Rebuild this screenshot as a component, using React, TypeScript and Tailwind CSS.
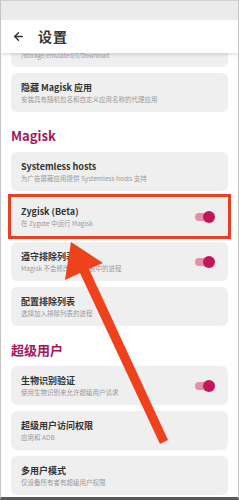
import React from 'react';
import { ArrowLeft } from 'lucide-react';

type Row = {
  title: string;
  desc: string;
  toggle?: boolean;
  boxed?: boolean;
};

const magiskRows: Row[] = [
  { title: 'Systemless hosts', desc: '为广告屏蔽应用提供 Systemless hosts 支持' },
  { title: 'Zygisk (Beta)', desc: '在 Zygote 中运行 Magisk', toggle: true, boxed: true },
  { title: '遵守排除列表', desc: 'Magisk 不会修改排除列表中的进程', toggle: true },
  { title: '配置排除列表', desc: '选择加入排除列表的进程' },
];

const suRows: Row[] = [
  { title: '生物识别验证', desc: '使用生物识别来允许超级用户请求', toggle: true },
  { title: '超级用户访问权限', desc: '应用和 ADB' },
  { title: '多用户模式', desc: '仅设备所有者有超级用户权限' },
];

const Toggle = () => (
  <div className="relative w-[20px] h-[12px] flex items-center shrink-0">
    <div className="w-[16px] h-[8px] rounded-full bg-[#e98bab]" />
    <div className="absolute right-0 w-[12px] h-[12px] rounded-full bg-[#c4145a]" />
  </div>
);

const Card = ({ row }: { row: Row }) => (
  <div
    className={`h-[39px] rounded-[6px] bg-[#efefef] pl-[10px] pr-[13px] flex items-center justify-between ${
      row.boxed ? 'ring-[3px] ring-[#e9411f] rounded-none' : ''
    }`}
  >
    <div className="flex flex-col">
      <span className="text-[9px] leading-[12px] font-semibold text-[#333]">{row.title}</span>
      <span className="text-[6.5px] leading-[9px] text-[#9a9a9a] mt-[1px]">{row.desc}</span>
    </div>
    {row.toggle && <Toggle />}
  </div>
);

const Section = ({ label }: { label: string }) => (
  <div className="h-[40px] flex items-center pt-[8px]">
    <span className="text-[13px] font-bold text-[#a3185b]">{label}</span>
  </div>
);

export default function App() {
  return (
    <div className="relative w-[239px] h-[500px] overflow-hidden bg-white border-x border-[#c4c4c4] border-b-[3px] border-b-[#5a5a5a] font-['Noto_Sans_CJK_SC','Noto_Sans',sans-serif]">
      {/* status bar */}
      <div className="h-[20px] bg-[#ebebeb] border-t border-[#cfcfcf]" />

      {/* app bar */}
      <div className="relative z-10 h-[33px] bg-white flex items-center px-[11px] gap-[13px] shadow-[0_2px_3px_rgba(0,0,0,0.12)]">
        <ArrowLeft size={13} strokeWidth={2.6} className="text-[#333]" />
        <span className="text-[14px] font-bold text-[#333] tracking-[1px]">设置</span>
      </div>

      <div className="flex flex-col gap-[6px] px-[10px]">
        {/* partially scrolled card */}
        <div className="h-[14px] rounded-b-[6px] bg-[#efefef] pl-[10px] flex items-start">
          <span className="text-[6px] leading-[7px] text-[#9a9a9a] mt-[-1px]">/storage/emulated/0/Download</span>
        </div>
        <Card row={{ title: '隐藏 Magisk 应用', desc: '安装具有随机包名和自定义应用名称的代理应用' }} />
      </div>

      <div className="flex flex-col px-[10px]">
        <Section label="Magisk" />
        <div className="flex flex-col gap-[6px]">
          {magiskRows.map((r) => (
            <Card key={r.title} row={r} />
          ))}
        </div>
        <Section label="超级用户" />
        <div className="flex flex-col gap-[6px]">
          {suRows.map((r) => (
            <Card key={r.title} row={r} />
          ))}
        </div>
      </div>

      {/* annotation arrow */}
      <svg className="absolute left-0 top-0 pointer-events-none" width="239" height="500" viewBox="0 0 239 500">
        <polygon
          points="70,242 102,263 88,269 167,440 159,444 79,273 64,280"
          fill="#f0411d"
        />
      </svg>
    </div>
  );
}
